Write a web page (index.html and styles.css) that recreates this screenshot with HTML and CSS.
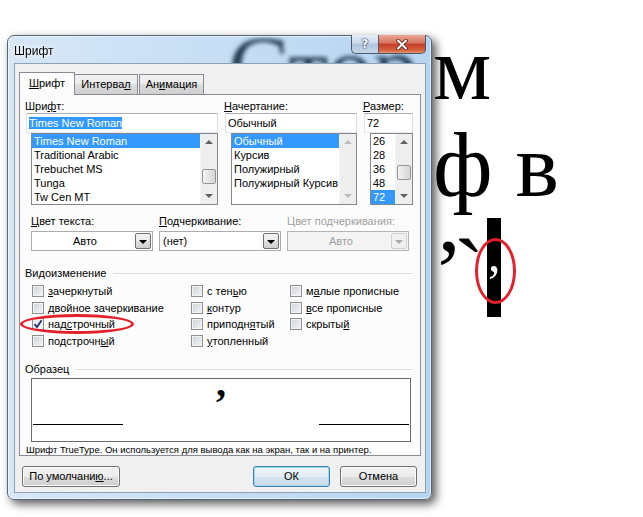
FILE: index.html
```html
<!DOCTYPE html>
<html lang="ru">
<head>
    <meta charset="UTF-8">
    <title>Шрифт</title>
    <link rel="stylesheet" href="styles.css">
</head>
<body>
    <div class="doc">
        <p><span class="covered">Стор</span>м</p>
        <p>ф в</p>
        <p><span class="marks">’`</span><span class="sel">,</span></p>
    </div>
    <div class="ring ring-page"></div>

    <div class="dialog">
        <div class="titlebar">
            <span class="title">Шрифт</span>
            <div class="caption">
                <span class="cap-btn help">?</span>
                <span class="cap-btn close">
                    <svg width="12" height="11" viewBox="0 0 12 11">
                        <path d="M2 1.5 L10 9.5 M10 1.5 L2 9.5" stroke="#5a1e14" stroke-width="3.6" stroke-linecap="round"/>
                        <path d="M2 1.5 L10 9.5 M10 1.5 L2 9.5" stroke="#fff" stroke-width="2" stroke-linecap="round"/>
                    </svg>
                </span>
            </div>
        </div>

        <div class="client">
            <div class="tabs">
                <span class="tab active"><u>Ш</u>рифт</span>
                <span class="tab tab-int">Интерва<u>л</u></span>
                <span class="tab tab-anim">Ан<u>и</u>мация</span>
            </div>

            <div class="panel">
                <div class="font-grid">
                    <div class="col">
                        <p class="label">Шри<u>ф</u>т:</p>
                        <div class="edit"><span class="hl">Times New Roman</span></div>
                        <div class="list">
                            <ul>
                                <li class="picked">Times New Roman</li>
                                <li>Traditional Arabic</li>
                                <li>Trebuchet MS</li>
                                <li>Tunga</li>
                                <li>Tw Cen MT</li>
                            </ul>
                            <div class="vscroll">
                                <span class="arrow up"></span>
                                <div class="track"><span class="thumb thumb-font"></span></div>
                                <span class="arrow down"></span>
                            </div>
                        </div>
                    </div>
                    <div class="col">
                        <p class="label"><u>Н</u>ачертание:</p>
                        <div class="edit">Обычный</div>
                        <div class="list">
                            <ul>
                                <li class="picked">Обычный</li>
                                <li>Курсив</li>
                                <li>Полужирный</li>
                                <li>Полужирный Курсив</li>
                            </ul>
                            <div class="vscroll off">
                                <span class="arrow up"></span>
                                <div class="track"></div>
                                <span class="arrow down"></span>
                            </div>
                        </div>
                    </div>
                    <div class="col">
                        <p class="label"><u>Р</u>азмер:</p>
                        <div class="edit">72</div>
                        <div class="list">
                            <ul>
                                <li>26</li>
                                <li>28</li>
                                <li>36</li>
                                <li>48</li>
                                <li class="picked">72</li>
                            </ul>
                            <div class="vscroll">
                                <span class="arrow up"></span>
                                <div class="track"><span class="thumb thumb-size"></span></div>
                                <span class="arrow down"></span>
                            </div>
                        </div>
                    </div>
                </div>

                <div class="combo-grid">
                    <div>
                        <p class="label"><u>Ц</u>вет текста:</p>
                        <div class="combo">
                            <span class="combo-text center">Авто</span>
                            <span class="combo-btn"></span>
                        </div>
                    </div>
                    <div>
                        <p class="label"><u>П</u>одчеркивание:</p>
                        <div class="combo">
                            <span class="combo-text">(нет)</span>
                            <span class="combo-btn"></span>
                        </div>
                    </div>
                    <div>
                        <p class="label disabled">Цвет подчеркивания:</p>
                        <div class="combo disabled">
                            <span class="combo-text center">Авто</span>
                            <span class="combo-btn"></span>
                        </div>
                    </div>
                </div>

                <p class="group">Видоизменение</p>
                <div class="checks">
                    <label class="check"><span class="box"></span><span><u>з</u>ачеркнутый</span></label>
                    <label class="check"><span class="box"></span><span>двойное зачеркивание</span></label>
                    <label class="check"><span class="box on">
                        <svg width="10" height="10" viewBox="0 0 10 10"><path d="M1.5 5.2 L4 8 L8.6 1.2" fill="none" stroke="#1f2f6e" stroke-width="1.8"/></svg>
                    </span><span>над<u>с</u>трочный</span></label>
                    <label class="check"><span class="box"></span><span>подстрочн<u>ы</u>й</span></label>
                    <label class="check"><span class="box"></span><span>с тен<u>ь</u>ю</span></label>
                    <label class="check"><span class="box"></span><span><u>к</u>онтур</span></label>
                    <label class="check"><span class="box"></span><span>приподн<u>я</u>тый</span></label>
                    <label class="check"><span class="box"></span><span><u>у</u>топленный</span></label>
                    <label class="check"><span class="box"></span><span>м<u>а</u>лые прописные</span></label>
                    <label class="check"><span class="box"></span><span><u>в</u>се прописные</span></label>
                    <label class="check"><span class="box"></span><span>скрыты<u>й</u></span></label>
                </div>

                <p class="group">Образец</p>
                <div class="sample">
                    <span class="rule"></span>
                    <span class="sample-text">,</span>
                    <span class="rule"></span>
                </div>
                <p class="info">Шрифт TrueType. Он используется для вывода как на экран, так и на принтер.</p>
            </div>

            <div class="buttons">
                <span class="btn btn-default-set">По умолчани<u>ю</u>...</span>
                <span class="btn btn-ok">ОК</span>
                <span class="btn">Отмена</span>
            </div>
        </div>
    </div>
    <div class="ring ring-dialog"></div>
</body>
</html>
```

FILE: styles.css
```css
* {
  box-sizing: border-box;
  margin: 0;
  padding: 0;
}

body {
  width: 643px;
  height: 517px;
  overflow: hidden;
  position: relative;
  background: #ffffff;
  color: #000000;
  font-family: 'Liberation Sans', Arial, sans-serif;
  font-size: 11px;
}

u {
  text-decoration: underline;
  text-underline-offset: 1px;
}

/* текст документа под окном */
.doc {
  padding: 20px 0 0 433px;
  font-family: 'Liberation Serif', 'Times New Roman', serif;
  font-size: 92px;
  line-height: 97px;
}

.doc p {
  white-space: nowrap;
}

.covered {
  display: inline-block;
  width: 205px;
  margin-left: -205px;
}

.marks {
  display: inline-block;
  vertical-align: -9px;
  letter-spacing: -10px;
}

.sel {
  display: inline-block;
  width: 14px;
  height: 99px;
  margin-top: 4px;
  margin-left: 13px;
  padding-top: 11px;
  vertical-align: top;
  background: #000000;
  color: #ffffff;
  font-size: 50px;
  line-height: 50px;
  text-align: center;
}

.ring {
  position: absolute;
  border: 3px solid #e3202b;
  border-radius: 50%;
}

.ring-page {
  left: 475px;
  top: 238px;
  width: 41px;
  height: 66px;
}

.ring-dialog {
  left: 20px;
  top: 314px;
  width: 114px;
  height: 20px;
}

/* окно */
.dialog {
  position: absolute;
  left: 7px;
  top: 35px;
  width: 425px;
  height: 465px;
  display: flex;
  flex-direction: column;
  border: 1px solid #55657a;
  border-radius: 7px;
  background: linear-gradient(to right, rgba(130, 180, 228, 0.32), rgba(90, 158, 224, 0.44));
  backdrop-filter: blur(2px);
  box-shadow: 4px 4px 10px rgba(0, 0, 0, 0.65), inset 0 0 0 1px rgba(255, 255, 255, 0.55);
}

.titlebar {
  height: 27px;
  display: flex;
  align-items: flex-start;
  padding-left: 6px;
}

.title {
  padding-top: 8px;
  font-size: 12px;
  text-shadow: 0 0 6px #ffffff, 0 0 3px #ffffff;
}

.caption {
  display: flex;
  margin-left: auto;
  margin-right: 5px;
  margin-top: -1px;
}

.cap-btn {
  height: 19px;
  display: flex;
  align-items: center;
  justify-content: center;
  border: 1px solid #4c5a6e;
  border-top: none;
}

.help {
  width: 27px;
  border-right: none;
  border-radius: 0 0 0 5px;
  background: linear-gradient(#e4edf8, #cbd9ea 45%, #b2c5de 50%, #c6d6ea);
  font-family: 'DejaVu Sans', sans-serif;
  font-weight: bold;
  font-size: 12px;
  color: #ffffff;
  text-shadow: 0 0 1px #33435a, 0 0 1px #33435a, 0 0 2px #33435a;
}

.close {
  width: 48px;
  border-radius: 0 0 5px 0;
  background: linear-gradient(#eaa898, #d6725c 45%, #c63d2a 50%, #d5623f 85%, #e5946a);
}

.client {
  height: 430px;
  margin: 0 5px 0 6px;
  padding: 8px 4px 0 4px;
  border: 1px solid #8fa1b5;
  background: #f0f0f0;
}

/* вкладки */
.tabs {
  display: flex;
  align-items: flex-end;
  height: 22px;
}

.tab {
  height: 20px;
  line-height: 19px;
  text-align: center;
  border: 1px solid #898c95;
  border-bottom: none;
  background: linear-gradient(#f2f2f2, #ebebeb 50%, #dddddd 50%, #cfcfcf);
}

.tab.active {
  position: relative;
  z-index: 1;
  width: 56px;
  height: 23px;
  line-height: 21px;
  margin-bottom: -1px;
  background: #fcfcfc;
}

.tab-int {
  width: 63px;
  border-left: none;
}

.tab-anim {
  width: 65px;
  margin-left: 1px;
}

.panel {
  height: 362px;
  padding: 4px 0 0 6px;
  border: 1px solid #898c95;
  background: #fcfcfc;
}

.label {
  height: 14px;
  line-height: 14px;
  margin-left: -1px;
  white-space: nowrap;
}

.label.disabled {
  color: #a0a0a0;
}

.font-grid {
  display: grid;
  grid-template-columns: 192px 132px 49px;
  column-gap: 7px;
}

.edit {
  height: 20px;
  line-height: 18px;
  padding: 0 2px;
  border: 1px solid #abadb3;
  border-color: #abadb3 #dbdfe6 #e3e9ef #e2e3ea;
  background: #ffffff;
  white-space: nowrap;
  overflow: hidden;
}

.hl {
  background: #3399ff;
  color: #ffffff;
}

.list {
  height: 72px;
  margin-left: 5px;
  display: flex;
  border: 1px solid #828790;
  background: #ffffff;
}

.col:nth-child(n+2) .list {
  margin-left: 6px;
}

.list ul {
  flex: 1;
  list-style: none;
  overflow: hidden;
}

.list li {
  height: 14px;
  line-height: 14px;
  padding-left: 2px;
  white-space: nowrap;
}

.list li.picked {
  background: #3399ff;
  color: #ffffff;
}

.vscroll {
  width: 17px;
  display: flex;
  flex-direction: column;
  background: #eeeeee;
  border-left: 1px solid #f4f4f4;
}

.arrow {
  height: 17px;
  position: relative;
}

.arrow::after {
  content: "";
  position: absolute;
  left: 4px;
  top: 6px;
  border-left: 4px solid transparent;
  border-right: 4px solid transparent;
}

.arrow.up::after {
  border-bottom: 4px solid #606060;
}

.arrow.down::after {
  top: 7px;
  border-top: 4px solid #606060;
}

.vscroll.off .arrow.up::after {
  border-bottom-color: #bcbcbc;
}

.vscroll.off .arrow.down::after {
  border-top-color: #bcbcbc;
}

.track {
  flex: 1;
  padding: 0 1px;
}

.thumb {
  display: block;
  height: 15px;
  border: 1px solid #959595;
  border-radius: 2px;
  background: linear-gradient(to right, #f3f3f3, #e4e4e4 50%, #d5d5d5);
}

.thumb-font {
  margin-top: 18px;
}

.thumb-size {
  margin-top: 14px;
}

/* цвет и подчеркивание */
.combo-grid {
  display: grid;
  grid-template-columns: repeat(3, 122px);
  column-gap: 6px;
  margin: 9px 0 0 5px;
}

.combo-grid .label {
  height: 17px;
  line-height: 15px;
  margin-left: 0;
}

.combo {
  height: 20px;
  display: flex;
  padding: 1px;
  border: 1px solid #abadb3;
  background: #ffffff;
}

.combo-text {
  flex: 1;
  line-height: 16px;
  padding-left: 2px;
}

.combo-text.center {
  text-align: center;
}

.combo-btn {
  width: 16px;
  position: relative;
  border: 1px solid #707070;
  border-radius: 2px;
  background: linear-gradient(#f2f2f2, #ebebeb 50%, #dddddd 50%, #cfcfcf);
}

.combo-btn::after {
  content: "";
  position: absolute;
  left: 3px;
  top: 6px;
  border-left: 4px solid transparent;
  border-right: 4px solid transparent;
  border-top: 4px solid #000000;
}

.combo.disabled {
  background: #f4f4f4;
  border-color: #b5b5b5;
  color: #a0a0a0;
}

.combo.disabled .combo-btn {
  border-color: #d0d0d0;
  background: #f0f0f0;
}

.combo.disabled .combo-btn::after {
  border-top-color: #a8a8a8;
}

/* группы */
.group {
  display: flex;
  align-items: center;
  gap: 7px;
  height: 14px;
  margin: 15px 8px 0 -1px;
}

.group::after {
  content: "";
  flex: 1;
  height: 1px;
  background: #d5dfe5;
  box-shadow: 0 1px 0 #ffffff;
}

.checks {
  display: grid;
  grid-template-columns: 159px 99px 1fr;
  grid-template-rows: repeat(4, 16.5px);
  grid-auto-flow: column;
  margin-top: 3px;
  padding-left: 6px;
}

.check {
  display: flex;
  align-items: center;
  gap: 4px;
  white-space: nowrap;
}

.box {
  width: 12px;
  height: 12px;
  display: flex;
  align-items: center;
  justify-content: center;
  border: 1px solid #8e8f8f;
  background: linear-gradient(135deg, #cdd1d8, #f4f5f6);
  box-shadow: inset 0 0 0 1px #f4f4f4;
}

.box.on {
  background: linear-gradient(135deg, #dfe3e8, #ffffff);
}

.checks + .group {
  margin-top: 13px;
}

.sample {
  width: 380px;
  height: 64px;
  margin: 2px 0 0 5px;
  display: flex;
  align-items: flex-start;
  border: 1px solid #6b6b6b;
  background: #ffffff;
}

.rule {
  width: 90px;
  height: 1px;
  margin: 45px 1px 0 1px;
  background: #000000;
}

.sample-text {
  flex: 1;
  margin-top: -6px;
  text-align: center;
  font-family: 'Liberation Serif', 'Times New Roman', serif;
  font-weight: bold;
  font-size: 40px;
  line-height: 20px;
}

.info {
  height: 14px;
  margin-top: 1px;
  line-height: 14px;
  font-size: 9.5px;
  white-space: nowrap;
}

/* кнопки */
.buttons {
  display: flex;
  gap: 10px;
  margin-top: 10px;
  padding: 0 4px 0 3px;
}

.btn {
  width: 77px;
  height: 21px;
  line-height: 19px;
  text-align: center;
  border: 1px solid #707070;
  border-radius: 3px;
  background: linear-gradient(#f2f2f2, #ebebeb 50%, #dddddd 50%, #cfcfcf);
  box-shadow: inset 0 0 0 1px #fbfbfb;
}

.btn-default-set {
  width: 98px;
  margin-right: auto;
}

.btn-ok {
  border-color: #3c7fb1;
  background: linear-gradient(#eef4f9, #e3edf5 50%, #d5e4ef 50%, #c9dbe8);
  box-shadow: inset 0 0 0 1px #9fd8f5;
}
```
